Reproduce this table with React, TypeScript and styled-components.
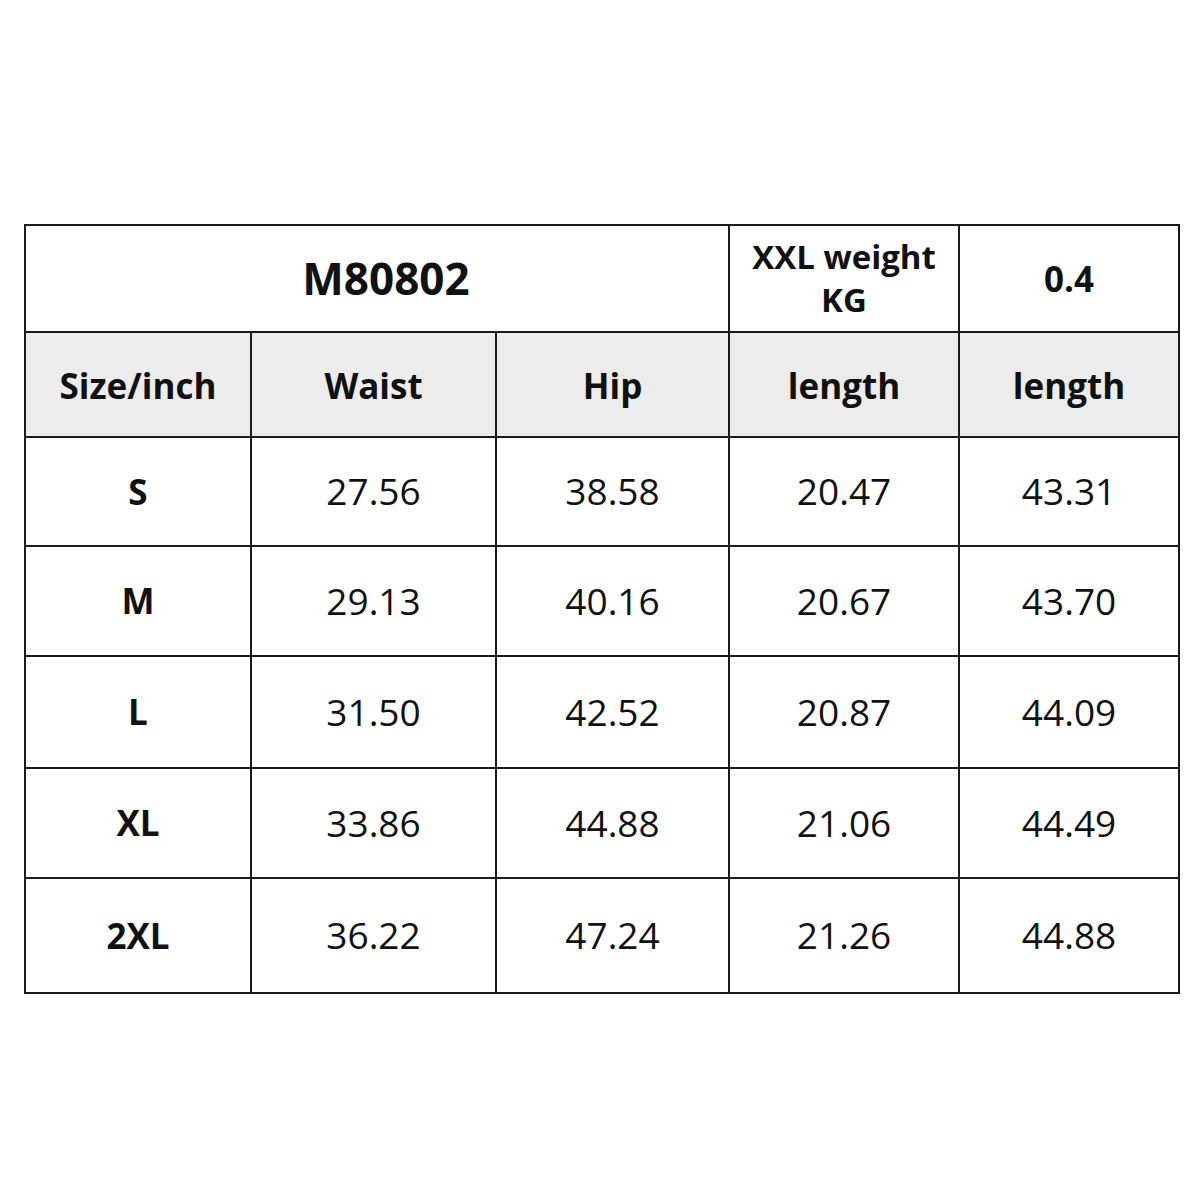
import React from "react";
import styled, { createGlobalStyle } from "styled-components";

const GlobalStyle = createGlobalStyle`
  body {
    margin: 0;
    background: #ffffff;
    font-family: "Open Sans", "Noto Sans", sans-serif;
    color: #111;
  }
`;

const Page = styled.div`
  width: 1200px;
  height: 1200px;
  padding: 224px 22px 0 24px;
  box-sizing: border-box;
`;

const Table = styled.table`
  border-collapse: collapse;
  width: 1154px;
  table-layout: fixed;
  border: 2px solid #111;
`;

const Cell = styled.td<{ $head?: boolean; $bold?: boolean; $h: number; $size?: number }>`
  border: 2px solid #1a1a1a;
  height: ${(p) => p.$h}px;
  padding: ${(p) => (p.$head ? "3px 0 0" : "0")};
  text-align: center;
  vertical-align: middle;
  background: ${(p) => (p.$head ? "#ececec" : "#ffffff")};
  font-weight: ${(p) => (p.$bold ? 700 : 400)};
  font-size: ${(p) => p.$size ?? (p.$bold ? 35 : 37)}px;
  line-height: 1.3;
`;

const TitleCell = styled(Cell)`
  padding-left: 18px;
`;

const widths = [226, 245, 233, 230, 220];

const rows = [
  ["S", "27.56", "38.58", "20.47", "43.31"],
  ["M", "29.13", "40.16", "20.67", "43.70"],
  ["L", "31.50", "42.52", "20.87", "44.09"],
  ["XL", "33.86", "44.88", "21.06", "44.49"],
  ["2XL", "36.22", "47.24", "21.26", "44.88"],
];
const rowHeights = [107, 108, 110, 108, 113];

export default function App() {
  return (
    <>
      <GlobalStyle />
      <Page>
        <Table>
          <colgroup>
            {widths.map((w, i) => (
              <col key={i} style={{ width: w }} />
            ))}
          </colgroup>
          <tbody>
            <tr>
              <TitleCell colSpan={3} $bold $h={105} $size={44}>
                M80802
              </TitleCell>
              <Cell $bold $h={105} $size={33}>
                XXL weight
                <br />
                KG
              </Cell>
              <Cell $bold $h={105}>
                0.4
              </Cell>
            </tr>
            <tr>
              {["Size/inch", "Waist", "Hip", "length", "length"].map((t, i) => (
                <Cell key={i} $head $bold $h={100}>
                  {t}
                </Cell>
              ))}
            </tr>
            {rows.map((r, ri) => (
              <tr key={ri}>
                {r.map((v, ci) => (
                  <Cell key={ci} $bold={ci === 0} $h={rowHeights[ri]}>
                    {v}
                  </Cell>
                ))}
              </tr>
            ))}
          </tbody>
        </Table>
      </Page>
    </>
  );
}
